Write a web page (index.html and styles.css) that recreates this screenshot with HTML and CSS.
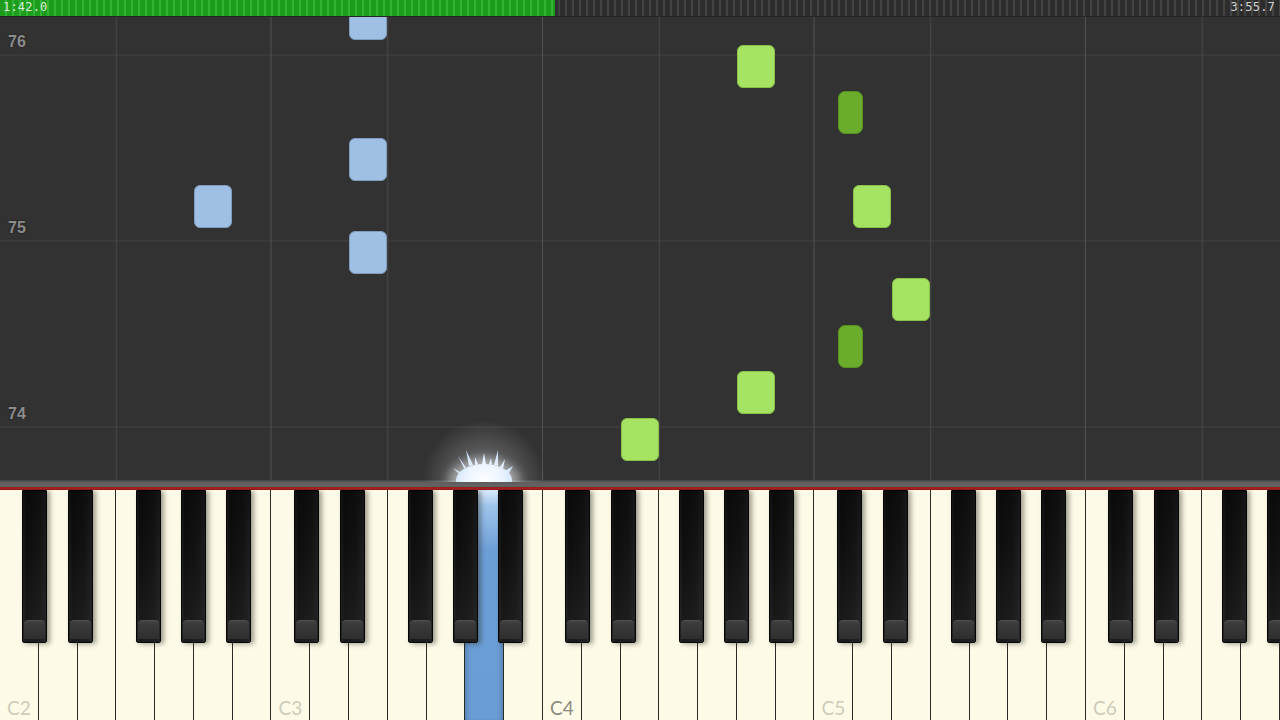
FILE: index.html
```html
<!DOCTYPE html>
<html>
<head>
<meta charset="utf-8">
<link rel="stylesheet" href="styles.css">
</head>
<body>
<div class="app">
  <div class="timebar">
    <div class="progress" style="width:43.35%"></div>
    <span class="time">1:42.0</span>
    <span class="time time-total">3:55.7</span>
  </div>
  <div class="roll">
    <span class="measure m76">76</span>
    <span class="measure m75">75</span>
    <span class="measure m74">74</span>

    <div class="note blue n1"></div>
    <div class="note blue n2"></div>
    <div class="note blue n3"></div>
    <div class="note blue n4"></div>

    <div class="note green n5"></div>
    <div class="note dark n6"></div>
    <div class="note green n7"></div>
    <div class="note green n8"></div>
    <div class="note dark n9"></div>
    <div class="note green n10"></div>
    <div class="note green n11"></div>
  </div>
  <div class="keybed"></div>
  <div class="keyboard">
    <div class="octave">
      <div class="white"><span class="label">C2</span></div>
      <div class="white"></div><div class="white"></div><div class="white"></div>
      <div class="white"></div><div class="white"></div><div class="white"></div>
      <div class="black cs"></div><div class="black ds"></div>
      <div class="black fs"></div><div class="black gs"></div><div class="black as"></div>
    </div>
    <div class="octave">
      <div class="white"><span class="label">C3</span></div>
      <div class="white"></div><div class="white"></div><div class="white"></div>
      <div class="white"></div><div class="white pressed"></div><div class="white"></div>
      <div class="black cs"></div><div class="black ds"></div>
      <div class="black fs"></div><div class="black gs"></div><div class="black as"></div>
    </div>
    <div class="octave">
      <div class="white"><span class="label label-mid">C4</span></div>
      <div class="white"></div><div class="white"></div><div class="white"></div>
      <div class="white"></div><div class="white"></div><div class="white"></div>
      <div class="black cs"></div><div class="black ds"></div>
      <div class="black fs"></div><div class="black gs"></div><div class="black as"></div>
    </div>
    <div class="octave">
      <div class="white"><span class="label">C5</span></div>
      <div class="white"></div><div class="white"></div><div class="white"></div>
      <div class="white"></div><div class="white"></div><div class="white"></div>
      <div class="black cs"></div><div class="black ds"></div>
      <div class="black fs"></div><div class="black gs"></div><div class="black as"></div>
    </div>
    <div class="octave">
      <div class="white"><span class="label">C6</span></div>
      <div class="white"></div><div class="white"></div><div class="white"></div>
      <div class="white"></div><div class="white"></div><div class="white"></div>
      <div class="black cs"></div><div class="black ds"></div>
      <div class="black fs"></div><div class="black gs"></div><div class="black as"></div>
    </div>
  </div>
  <div class="glow">
    <svg width="160" height="80" viewBox="0 0 160 80">
      <defs>
        <radialGradient id="halo" gradientUnits="userSpaceOnUse" cx="80" cy="80" r="62">
          <stop offset="0" stop-color="#ffffff" stop-opacity="0.6"/>
          <stop offset="0.5" stop-color="#eef3fb" stop-opacity="0.2"/>
          <stop offset="1" stop-color="#ffffff" stop-opacity="0"/>
        </radialGradient>
        <radialGradient id="core" gradientUnits="userSpaceOnUse" cx="80" cy="80" r="32">
          <stop offset="0" stop-color="#ffffff"/>
          <stop offset="0.6" stop-color="#eaf3ff"/>
          <stop offset="1" stop-color="#cfe2fa"/>
        </radialGradient>
        <filter id="soft" x="-30%" y="-30%" width="160%" height="160%">
          <feGaussianBlur stdDeviation="0.7"/>
        </filter>
        <filter id="blur" x="-50%" y="-50%" width="200%" height="200%">
          <feGaussianBlur stdDeviation="5"/>
        </filter>
      </defs>
      <rect x="0" y="0" width="160" height="80" fill="url(#halo)"/>
      <ellipse cx="80" cy="78" rx="36" ry="22" fill="#ffffff" opacity="0.4" filter="url(#blur)"/>
      <g fill="url(#core)" filter="url(#soft)">
        <polygon points="49,66 56,70 58,75"/>
        <polygon points="54,54 60,66 63,67"/>
        <polygon points="62,48 65,64 69,63"/>
        <polygon points="71,55 71,63 74,62"/>
        <polygon points="80,51 78,62 82,62"/>
        <polygon points="87,56 85,62 88,63"/>
        <polygon points="94,48 90,63 94,64"/>
        <polygon points="101,57 96,65 99,67"/>
        <polygon points="109,64 101,69 104,73"/>
        <ellipse cx="80" cy="78" rx="28" ry="16"/>
      </g>
    </svg>
  </div>
</div>
</body>
</html>
```

FILE: styles.css
```css
* { box-sizing: border-box; }

html, body {
  margin: 0;
  padding: 0;
  background: #323232;
}

.app {
  position: relative;
  width: 1280px;
  height: 720px;
  overflow: hidden;
  display: flex;
  flex-direction: column;
  font-family: "DejaVu Sans", sans-serif;
}

/* ---------- time bar ---------- */
.timebar {
  position: relative;
  height: 17px;
  flex: 0 0 17px;
  display: flex;
  justify-content: space-between;
  align-items: flex-start;
  padding: 0 5px 0 3px;
  background:
    repeating-linear-gradient(to right, #2d2d2d 0 5px, #434343 5px 7px);
  border-bottom: 1px solid #252525;
  z-index: 2;
}

.progress {
  position: absolute;
  left: 0;
  top: 0;
  bottom: 0;
  background:
    repeating-linear-gradient(to right, #1d9c1d 0 5px, #33b333 5px 7px);
}

.time {
  position: relative;
  font-family: "DejaVu Sans Mono", monospace;
  font-size: 12px;
  line-height: 15px;
  color: #d8eed8;
  letter-spacing: 0.2px;
}

.time-total {
  color: #d2d2d2;
}

/* ---------- piano roll ---------- */
.roll {
  position: relative;
  flex: 1 1 auto;
  overflow: hidden;
  background-color: #323232;
  background-image:
    linear-gradient(to right, transparent 0 270.8px, #525252 270.8px 272.3px, transparent 272.3px),
    linear-gradient(to right, transparent 0 115.6px, #484848 115.6px 117.1px, transparent 117.1px),
    linear-gradient(to bottom, #414141 0 1.5px, transparent 1.5px);
  background-size:
    271.515px 100%,
    271.515px 100%,
    100% 186px;
  background-position:
    0 0,
    0 0,
    0 37.5px;
}

.measure {
  position: absolute;
  left: 8px;
  font-family: "Liberation Sans", sans-serif;
  font-weight: bold;
  font-size: 16px;
  color: #8c8c8c;
  text-shadow: 0 0 2px #1a1a1a;
}
.m76 { top: 16px; }
.m75 { top: 202px; }
.m74 { top: 388px; }

.note {
  position: absolute;
  width: 38px;
  height: 43px;
  border-radius: 6px;
}
.blue {
  background: #9fc0e4;
  border: 1px solid #7d9cbe;
}
.green {
  background: #a6e362;
  border: 1px solid #88c248;
}
.dark {
  width: 25px;
  background: #6aac2c;
  border: 1px solid #57921f;
  border-radius: 7px;
}

.n1 { left: 349px; top: -20px; }
.n2 { left: 349px; top: 121px; }
.n3 { left: 194px; top: 168px; }
.n4 { left: 349px; top: 214px; }
.n5 { left: 737px; top: 28px; }
.n6 { left: 838px; top: 74px; }
.n7 { left: 853px; top: 168px; }
.n8 { left: 892px; top: 261px; }
.n9 { left: 838px; top: 308px; }
.n10 { left: 737px; top: 354px; }
.n11 { left: 621px; top: 401px; }

/* ---------- key bed ---------- */
.keybed {
  flex: 0 0 10px;
  height: 10px;
  background: linear-gradient(to bottom, #3e3e3e 0, #5c5c5c 2px, #646464 6px, #5a5a5a 7px, #951d1d 7px, #a82222 9px, #7a1515 10px);
}

/* ---------- keyboard ---------- */
.keyboard {
  flex: 0 0 230px;
  height: 230px;
  display: flex;
  overflow: hidden;
  background: #fdfbe7;
}

.octave {
  position: relative;
  flex: 0 0 271.515px;
  display: flex;
}

.white {
  flex: 1 1 0;
  display: flex;
  align-items: flex-end;
  background: #fdfbe7;
  border-right: 1.5px solid #2a2a26;
}

.white.pressed {
  background: linear-gradient(to bottom, #dcebfb 0, #9fc4ec 16px, #6d9fd7 60px, #6a9dd5 100%);
  box-shadow: inset -5px 0 6px -5px rgba(0, 0, 0, 0.3), inset 5px 0 6px -5px rgba(0, 0, 0, 0.3);
}

.label {
  font-family: "Lato", "Open Sans", sans-serif;
  font-size: 19px;
  line-height: 1;
  color: #cdcbbb;
  padding: 0 0 3px 7px;
}
.label-mid {
  color: #8c8a80;
}

.black {
  position: absolute;
  top: 0;
  width: 25px;
  height: 153px;
  background: linear-gradient(to right, #1c1c1c 0, #0e0e0e 3px, #141414 70%, #1e1e1e 100%);
  border: 1px solid #050505;
  border-radius: 0 0 2px 2px;
  box-shadow: 3px 1px 5px rgba(40, 40, 30, 0.45);
}
.black::before {
  content: "";
  position: absolute;
  left: 0;
  right: 0;
  top: 0;
  bottom: 0;
  background: linear-gradient(to bottom, rgba(0, 0, 0, 0.3) 0, rgba(0, 0, 0, 0) 40%, rgba(60, 60, 60, 0.25) 88%);
}
.black::after {
  content: "";
  position: absolute;
  left: 1px;
  right: 1px;
  bottom: 3px;
  height: 18px;
  background: linear-gradient(to bottom, #444 0, #3a3a3a 3px, #353535 10px, #2e2e2e 100%);
  border-top: 1px solid #4e4e4e;
  border-radius: 4px 4px 0 0;
}

.cs { left: 22.3px; }
.ds { left: 68px; }
.fs { left: 136px; }
.gs { left: 181px; }
.as { left: 226px; }

/* ---------- glow over the pressed key ---------- */
.glow {
  position: absolute;
  left: 404px;
  top: 402px;
  width: 160px;
  height: 80px;
  pointer-events: none;
  z-index: 3;
}
.glow svg {
  display: block;
}
```
